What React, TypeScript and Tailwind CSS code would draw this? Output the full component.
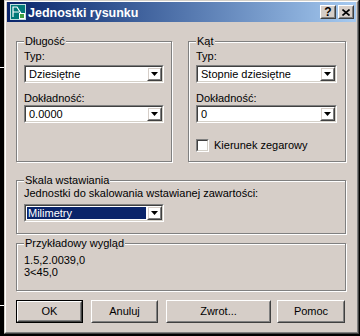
import type { ReactNode } from 'react';

const face = 'bg-[#d6cec8]';

function Raised({ className = '', children }: { className?: string; children?: ReactNode }) {
  return (
    <div className={`border border-t-white border-l-white border-r-[#404040] border-b-[#404040] ${className}`}>
      <div className="flex h-full w-full items-center justify-center border border-t-[#d6cec8] border-l-[#d6cec8] border-r-[#808080] border-b-[#808080]">
        {children}
      </div>
    </div>
  );
}

function Sunken({ className = '', children }: { className?: string; children?: ReactNode }) {
  return (
    <div className={`border border-t-[#808080] border-l-[#808080] border-r-white border-b-white ${className}`}>
      <div className="flex h-full w-full border border-t-[#404040] border-l-[#404040] border-r-[#d4d0c8] border-b-[#d4d0c8] bg-white">
        {children}
      </div>
    </div>
  );
}

function Arrow() {
  return (
    <svg width="7" height="4" viewBox="0 0 7 4">
      <polygon points="0,0 7,0 3.5,4" fill="#000" />
    </svg>
  );
}

function Combo({ value, selected = false, width = 'w-[140px]' }: { value: string; selected?: boolean; width?: string }) {
  return (
    <Sunken className={`h-[18px] ${width}`}>
      <div className="flex flex-1 items-center p-px">
        {selected ? (
          <span className="flex h-full flex-1 items-center bg-[#0a246a] pl-[1px] text-white">{value}</span>
        ) : (
          <span className="pl-[2px]">{value}</span>
        )}
      </div>
      <Raised className="h-full w-[15px]">
        <Arrow />
      </Raised>
    </Sunken>
  );
}

function Group({ title, className = '', children }: { title: string; className?: string; children?: ReactNode }) {
  return (
    <fieldset
      className={`border border-[#808080] px-[7px] shadow-[inset_1px_1px_0_#fff,1px_1px_0_#fff] ${className}`}
    >
      <legend className={`px-[1px] leading-[13px] ${face}`}>{title}</legend>
      {children}
    </fieldset>
  );
}

function CadIcon() {
  return (
    <svg width="16" height="16" viewBox="0 0 16 16">
      <rect x="0.5" y="0.5" width="15" height="15" fill="#007878" stroke="#c0e0e0" />
      <polyline points="3,13 3,3 7,3 12,11" fill="none" stroke="#fff" strokeWidth="1.2" />
      <line x1="3" y1="8" x2="9" y2="8" stroke="#fff" strokeWidth="1" />
      <rect x="9.5" y="9.5" width="5" height="5" fill="#40a040" stroke="#fff" />
    </svg>
  );
}

export default function App() {
  return (
    <div className="flex h-[336px] w-[360px] overflow-hidden bg-black font-['Liberation_Sans',Arial,sans-serif] text-[11px] leading-[13px] text-black">
      <div className="flex w-[4px] shrink-0 flex-col">
        <div className="h-[67px]" />
        <div className="h-px bg-white" />
        <div className="h-[237px]" />
        <div className="h-px bg-white" />
      </div>

      <div className="h-[334px] w-[355px] shrink-0 border border-t-[#d4d0c8] border-l-[#d4d0c8] border-r-[#404040] border-b-[#404040]">
        <div className={`flex h-full flex-col border border-t-white border-l-white border-r-[#808080] border-b-[#808080] px-px ${face}`}>
          {/* title bar */}
          <div className="flex h-[20px] items-center bg-gradient-to-r from-[#0a246a] to-[#a6caf0] pl-[3px] pr-[2px]">
            <CadIcon />
            <span className="ml-[2px] mt-[2px] text-[12.5px] font-bold text-white">Jednostki rysunku</span>
            <div className="ml-auto flex gap-[2px]">
              <Raised className={`h-[14px] w-[16px] ${face}`}>
                <span className="text-[12px] font-bold leading-[10px]">?</span>
              </Raised>
              <Raised className={`h-[14px] w-[16px] ${face}`}>
                <svg width="8" height="7" viewBox="0 0 8 7">
                  <path d="M0.5 0.5 L7.5 6.5 M7.5 0.5 L0.5 6.5" stroke="#000" strokeWidth="1.6" />
                </svg>
              </Raised>
            </div>
          </div>

          <div className="flex flex-col pl-[9px] pt-[13px]">
            <div className="flex gap-[16px]">
              <Group title="Długość" className="h-[127px] w-[156px]">
                <div className="flex flex-col pt-[2px]">
                  <span>Typ:</span>
                  <div className="mt-[2px]">
                    <Combo value="Dziesiętne" />
                  </div>
                  <span className="mt-[9px]">Dokładność:</span>
                  <Combo value="0.0000" />
                </div>
              </Group>
              <Group title="Kąt" className="h-[127px] w-[158px]">
                <div className="flex flex-col pt-[2px]">
                  <span>Typ:</span>
                  <div className="mt-[2px]">
                    <Combo value="Stopnie dziesiętne" width="w-[141px]" />
                  </div>
                  <span className="mt-[9px]">Dokładność:</span>
                  <Combo value="0" width="w-[141px]" />
                  <div className="mt-[16px] flex items-center gap-[5px]">
                    <Sunken className="h-[13px] w-[13px]" />
                    <span>Kierunek zegarowy</span>
                  </div>
                </div>
              </Group>
            </div>

            <Group title="Skala wstawiania" className="mt-[12px] h-[60px] w-[330px]">
              <div className="flex flex-col">
                <span>Jednostki do skalowania wstawianej zawartości:</span>
                <div className="mt-[4px]">
                  <Combo value="Milimetry" selected />
                </div>
              </div>
            </Group>

            <Group title="Przykładowy wygląd" className="mt-[3px] h-[54px] w-[330px]">
              <div className="flex flex-col pt-[4px] leading-[12px]">
                <span>1.5,2.0039,0</span>
                <span>3&lt;45,0</span>
              </div>
            </Group>

            <div className="mt-[9px] flex">
              <div className="h-[23px] w-[67px] border border-black">
                <Raised className="h-full w-full">OK</Raised>
              </div>
              <Raised className="ml-[8px] h-[23px] w-[67px]">Anuluj</Raised>
              <Raised className="ml-[8px] h-[23px] w-[105px]">Zwrot...</Raised>
              <Raised className="ml-[6px] h-[23px] w-[68px]">Pomoc</Raised>
            </div>
          </div>
        </div>
      </div>
    </div>
  );
}
